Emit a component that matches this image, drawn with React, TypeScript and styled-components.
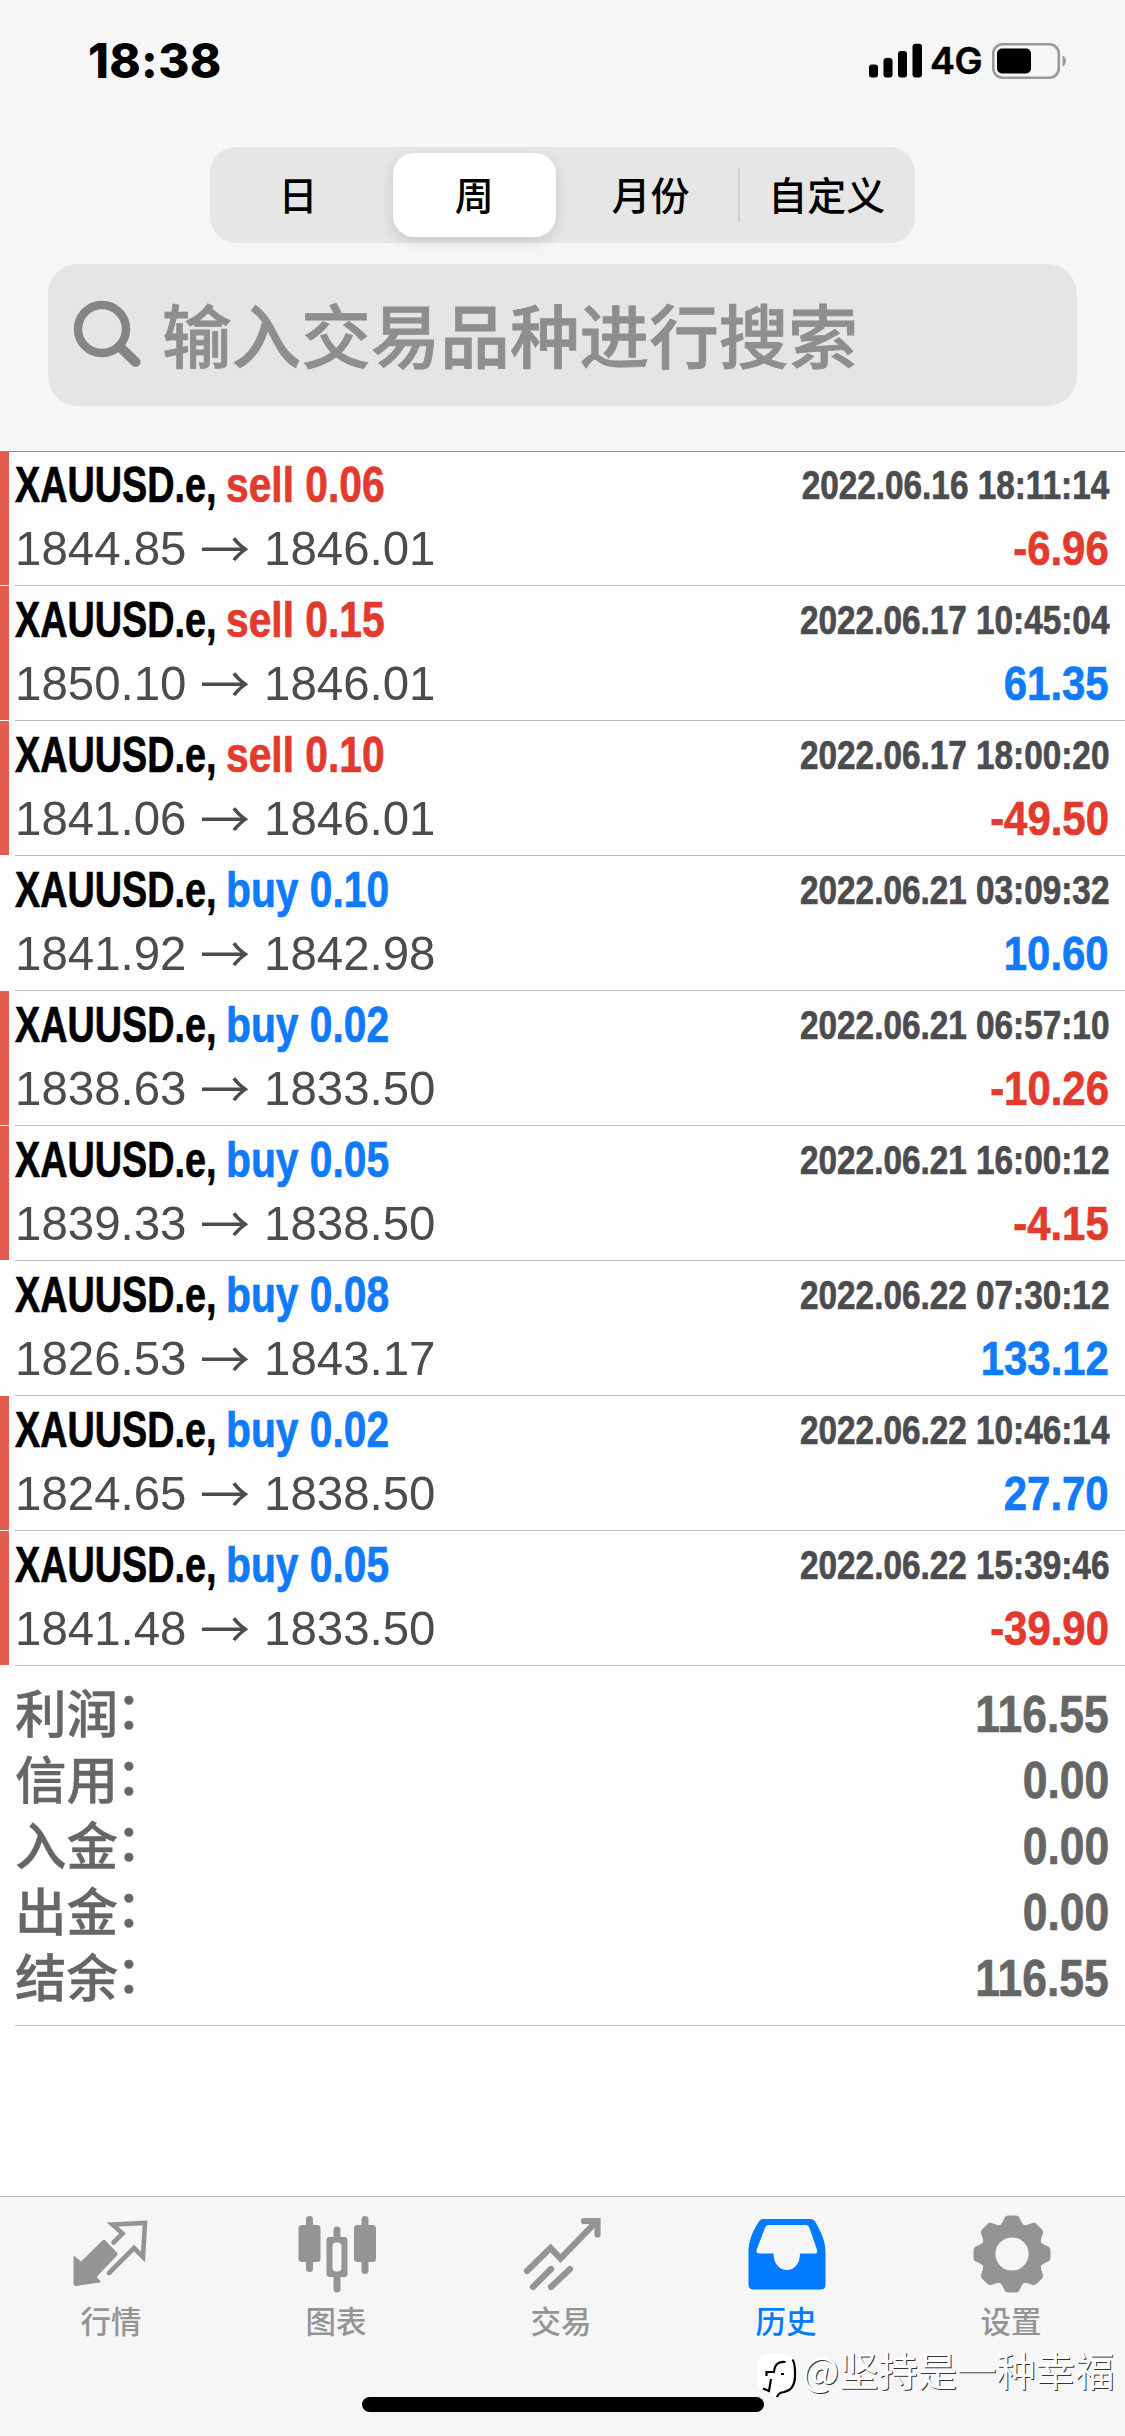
import React from 'react';
import styled, { createGlobalStyle } from 'styled-components';

const RED = '#e23b2e';
const BLUE = '#0f7afa';

const GlobalStyle = createGlobalStyle`
  * { box-sizing: border-box; }
  body { margin: 0; background: #fff; }
`;

const Screen = styled.div`
  position: relative;
  display: flex;
  flex-direction: column;
  width: 1125px;
  height: 2436px;
  overflow: hidden;
  background: #fefefe;
  font-family: 'Liberation Sans', 'Noto Sans CJK SC', sans-serif;
`;

const Header = styled.header`
  display: flex;
  flex-direction: column;
  align-items: center;
  height: 451px;
  background: #f6f6f6;
`;

const StatusBar = styled.div`
  display: flex;
  justify-content: space-between;
  width: 100%;
  height: 147px;
  padding: 32px 58px 0 88px;
  color: #000;
  font-family: Inter, sans-serif;
`;

const Clock = styled.span`
  font-size: 47.5px;
  line-height: 58px;
  font-weight: 800;
  letter-spacing: 0.3px;
`;

const StatusRight = styled.div`
  display: flex;
  height: 58px;
  align-items: center;
`;

const Network = styled.span`
  width: 62px;
  margin-left: 7px;
  font-size: 37.5px;
  font-weight: 600;
  line-height: 58px;
  letter-spacing: -0.5px;
  -webkit-text-stroke: 0.5px #000;
`;

const Segmented = styled.div`
  display: flex;
  width: 705px;
  height: 96px;
  padding: 6px 0;
  border-radius: 26px;
  background: #e6e6e6;
`;

const Segment = styled.button<{ $active?: boolean }>`
  display: flex;
  flex: 1;
  align-items: center;
  justify-content: center;
  margin: 0 7px;
  padding: 0 0 4px;
  border: 0;
  border-radius: 21px;
  background: ${p => (p.$active ? '#fff' : 'transparent')};
  box-shadow: ${p => (p.$active ? '0 5px 14px rgba(0,0,0,.12)' : 'none')};
  color: #000;
  font-family: 'Noto Sans CJK SC', sans-serif;
  font-size: 39px;
  font-weight: 500;
  white-space: nowrap;
`;

const SegmentDivider = styled.i`
  width: 2px;
  height: 54px;
  margin: 15px -1px;
  background: #cfcfd1;
`;

const SearchBox = styled.div`
  display: flex;
  align-items: center;
  width: 1029px;
  height: 142px;
  margin-top: 21px;
  padding-left: 24px;
  border-radius: 30px;
  background: #e5e5e7;
`;

const Placeholder = styled.span`
  margin: -5px 0 0 16px;
  color: #8e8e90;
  font-family: 'Noto Sans CJK SC', sans-serif;
  font-size: 69.6px;
  font-weight: 500;
  line-height: 100px;
  -webkit-text-stroke: 0.8px #8e8e90;
`;

const Deals = styled.main`
  display: flex;
  flex-direction: column;
  border-top: 1px solid #8f8f92;
`;

const Deal = styled.section<{ $marked: boolean }>`
  display: flex;
  height: 135px;
  padding-left: 6px;
  background: linear-gradient(${p => (p.$marked ? '#e35d4f, #e35d4f' : 'transparent, transparent')}) 0 0 / 9px calc(100% - 1px) no-repeat;
  &:first-child { height: 134px; }
`;

const DealBody = styled.div`
  display: flex;
  flex: 1;
  flex-direction: column;
  justify-content: flex-end;
  margin-left: 9px;
  padding: 0 16px 6px 0;
  border-bottom: 1px solid #bcbcbf;
`;

const Line = styled.div<{ $h: number }>`
  display: flex;
  align-items: center;
  justify-content: space-between;
  height: ${p => p.$h}px;
`;

const Group = styled.div`
  display: flex;
  align-items: center;
`;

const Condensed = styled.span<{ $size: number; $sx: number; $color: string; $w?: number; $right?: boolean }>`
  display: block;
  width: ${p => (p.$w ? `${p.$w}px` : 'auto')};
  color: ${p => p.$color};
  font-size: ${p => p.$size}px;
  font-weight: 700;
  line-height: 60px;
  white-space: nowrap;
  -webkit-text-stroke: 0.7px ${p => p.$color};
  transform: scaleX(${p => p.$sx});
  transform-origin: ${p => (p.$right ? '100%' : '0')} 50%;
`;

const Price = styled.span<{ $w?: number }>`
  width: ${p => (p.$w ? `${p.$w}px` : 'auto')};
  color: #4c4c4f;
  font-size: 49px;
  line-height: 60px;
  transform: scaleX(0.968);
  transform-origin: 0 50%;
`;

const Arrow = styled.span`
  width: 64px;
  margin: -4px 0 0 1px;
  color: #4c4c4f;
  font-family: 'Noto Sans CJK SC', sans-serif;
  font-size: 50px;
  font-weight: 400;
  line-height: 60px;
`;

const Summary = styled.section`
  display: flex;
  flex-direction: column;
  height: 360px;
  margin-left: 15px;
  padding: 15px 16px 0 0;
  border-bottom: 1px solid #bcbcbf;
`;

const SummaryLabel = styled.span`
  display: flex;
  margin-top: -7px;
  color: #666;
  font-family: 'Noto Sans CJK SC', sans-serif;
  font-size: 51.5px;
  font-weight: 500;
  line-height: 66px;
  -webkit-text-stroke: 0.4px #666;
`;

const Colon = styled.span`
  transform: translate(-2px, -4px);
`;

const TabBar = styled.nav`
  display: flex;
  height: 240px;
  margin-top: auto;
  border-top: 1px solid #b0b0b2;
  background: #f6f6f6;
`;

const Tab = styled.a<{ $active?: boolean }>`
  display: flex;
  flex: 1;
  flex-direction: column;
  align-items: center;
  padding: 18px 1px 0 0;
  color: ${p => (p.$active ? '#007aff' : '#949494')};
`;

const TabLabel = styled.span`
  margin: 5px 2px 0 0;
  font-family: 'Noto Sans CJK SC', sans-serif;
  font-size: 30.5px;
  font-weight: 500;
  line-height: 44px;
`;

const HomeIndicator = styled.div`
  position: absolute;
  left: 362px;
  top: 2397px;
  width: 402px;
  height: 15px;
  border-radius: 8px;
  background: #000;
`;

const Watermark = styled.div`
  position: absolute;
  left: 756px;
  top: 2340px;
  display: flex;
  align-items: center;
  color: #fff;
  font-family: 'Noto Sans CJK SC', sans-serif;
  font-size: 39.3px;
  font-weight: 400;
  line-height: 60px;
  white-space: nowrap;
  text-shadow: 1px 1px 0 #333;
`;

const WatermarkText = styled.span`
  margin-top: -2px;
`;

type DealData = { side: 'sell' | 'buy'; lot: string; from: string; to: string; time: string; profit: string; marked: boolean };

const deals: DealData[] = [
  { side: 'sell', lot: '0.06', from: '1844.85', to: '1846.01', time: '2022.06.16 18:11:14', profit: '-6.96', marked: true },
  { side: 'sell', lot: '0.15', from: '1850.10', to: '1846.01', time: '2022.06.17 10:45:04', profit: '61.35', marked: true },
  { side: 'sell', lot: '0.10', from: '1841.06', to: '1846.01', time: '2022.06.17 18:00:20', profit: '-49.50', marked: true },
  { side: 'buy', lot: '0.10', from: '1841.92', to: '1842.98', time: '2022.06.21 03:09:32', profit: '10.60', marked: false },
  { side: 'buy', lot: '0.02', from: '1838.63', to: '1833.50', time: '2022.06.21 06:57:10', profit: '-10.26', marked: true },
  { side: 'buy', lot: '0.05', from: '1839.33', to: '1838.50', time: '2022.06.21 16:00:12', profit: '-4.15', marked: true },
  { side: 'buy', lot: '0.08', from: '1826.53', to: '1843.17', time: '2022.06.22 07:30:12', profit: '133.12', marked: false },
  { side: 'buy', lot: '0.02', from: '1824.65', to: '1838.50', time: '2022.06.22 10:46:14', profit: '27.70', marked: true },
  { side: 'buy', lot: '0.05', from: '1841.48', to: '1833.50', time: '2022.06.22 15:39:46', profit: '-39.90', marked: true },
];

const totals = [
  ['利润', '116.55'],
  ['信用', '0.00'],
  ['入金', '0.00'],
  ['出金', '0.00'],
  ['结余', '116.55'],
];

const SignalIcon = () => (
  <svg width="54" height="36" viewBox="0 0 54 36">
    <rect x="0" y="21.5" width="9" height="13" rx="3" />
    <rect x="14.5" y="15" width="9" height="19.5" rx="3" />
    <rect x="29" y="8" width="9" height="26.5" rx="3" />
    <rect x="43.5" y="0.8" width="9.5" height="33.7" rx="3" />
  </svg>
);

const BatteryIcon = () => (
  <svg width="75" height="36" viewBox="0 0 75 36">
    <rect x="1.2" y="1.2" width="65.6" height="33.6" rx="9.5" fill="none" stroke="#9a9a9a" strokeWidth="2.6" />
    <rect x="5" y="5.5" width="34" height="25" rx="5" />
    <path d="M70.5 12.5q3.5 1.8 3.5 5.5t-3.5 5.5z" fill="#9a9a9a" />
  </svg>
);

const SearchIcon = () => (
  <svg width="74" height="72" viewBox="0 0 74 72" fill="none" stroke="#858588" strokeLinecap="round">
    <circle cx="30" cy="30" r="24" strokeWidth="8.4" />
    <path d="M48 48L63.500 63" strokeWidth="10" />
  </svg>
);

const QuotesIcon = () => (
  <svg width="78" height="78" viewBox="0 0 78 78">
    <path d="M32.5 25.500Q31 24 29.500 25.500L8 46.500L1.500 41Q0.500 40.500 0.500 42V68.500Q0.500 71 3 71L26.500 67.500Q28.500 67 27 65.500L23.500 62L44 40.500Q45.500 39 44 37.500Z" fill="currentColor" />
    <path d="M40.500 27.500L49.500 18.500L39.500 9.500L72 8L70 42L61 33L36 58" fill="none" stroke="currentColor" strokeWidth="4.600" strokeLinecap="round" />
  </svg>
);

const ChartIcon = () => (
  <svg width="78" height="78" viewBox="0 0 78 78" fill="currentColor">
    <rect x="0.500" y="10" width="22" height="37" rx="3.500" />
    <rect x="8" y="1" width="7" height="56" rx="3.500" />
    <rect x="56" y="10" width="22" height="37" rx="3.500" />
    <rect x="63.500" y="1" width="7" height="58" rx="3.500" />
    <path fillRule="evenodd" d="M31.500 22H35.500V15a3.500 3.500 0 0 1 7 0v7H46.500a3 3 0 0 1 3 3V59a3 3 0 0 1-3 3H42.500V74a3.500 3.500 0 0 1-7 0V62H31.500a3 3 0 0 1-3-3V25a3 3 0 0 1 3-3zM38 27.500q-3.500 0-3.500 4V52.500q0 4 3.500 4h2q3.500 0 3.500-4V31.500q0-4-3.500-4z" />
  </svg>
);

const TradeIcon = () => (
  <svg width="78" height="78" viewBox="0 0 78 78" fill="none" stroke="currentColor" strokeWidth="6.200" strokeLinecap="round">
    <path d="M4 56L27.500 33L37.500 43.500L73 7" />
    <path d="M61 6H74.500V19.500" />
    <path d="M10 72L28 54M28 72L47 54" />
  </svg>
);

const HistoryIcon = () => (
  <svg width="78" height="78" viewBox="0 0 78 78" fill="currentColor">
    <path fillRule="evenodd" d="M15 4H62.500Q66 4 68 8C74 19 77.500 27 77.500 37V69.500Q77.500 74.500 72.500 74.500H5.500Q0.500 74.500 0.500 69.500V37C0.500 27 4 17 10 8Q12 4 15 4ZM21 10Q18 10 17 13L8.500 35Q8 38.500 11.500 38.500H25.500C25.500 48 31 55 39 55S52 48 52 38.500H66.500Q70 38.500 69 35L61.500 13Q60.500 10 57.500 10Z" />
  </svg>
);

const toothRing = Array.from({ length: 8 }, (_, i) => i * 45);

const SettingsIcon = () => (
  <svg width="78" height="78" viewBox="0 0 78 78">
    <circle cx="39" cy="39" r="23.800" fill="none" stroke="currentColor" strokeWidth="14.400" />
    {toothRing.map(a => (
      <path key={a} transform={`rotate(${a} 39 39)`} fill="currentColor" d="M26 11C28.500 9.500 29.500 7 31 4Q32 0.500 35.500 0.500H42.500Q46 0.500 47 4C48.500 7 49.500 9.500 52 11L46 20H32Z" />
    ))}
  </svg>
);

const WatermarkLogo = () => (
  <svg width="46" height="60" viewBox="0 0 46 60">
    <path d="M13 14H27Q38 14 38 26V40Q38 51 27 52Q22 53 20 58L14 52Q1 52 1 40V26Q1 14 13 14Z" fill="#fff" />
    <path d="M36.500 19.500Q39.500 24 39 37Q38.500 50 28 52Q22.500 52.500 21 57" fill="none" stroke="#000" strokeWidth="2.200" />
    <path d="M29.500 22Q19 20.500 18 32H10.500V36M15 39L13 51L7 48.500M25 34H28" fill="none" stroke="#000" strokeWidth="2.200" />
  </svg>
);

const tabs = [
  { label: '行情', Icon: QuotesIcon },
  { label: '图表', Icon: ChartIcon },
  { label: '交易', Icon: TradeIcon },
  { label: '历史', Icon: HistoryIcon, active: true },
  { label: '设置', Icon: SettingsIcon },
];

export default function App() {
  return (
    <Screen>
      <GlobalStyle />
      <Header>
        <StatusBar>
          <Clock>18:38</Clock>
          <StatusRight>
            <SignalIcon />
            <Network>4G</Network>
            <BatteryIcon />
          </StatusRight>
        </StatusBar>
        <Segmented>
          <Segment>日</Segment>
          <Segment $active>周</Segment>
          <Segment>月份</Segment>
          <SegmentDivider />
          <Segment>自定义</Segment>
        </Segmented>
        <SearchBox>
          <SearchIcon />
          <Placeholder>输入交易品种进行搜索</Placeholder>
        </SearchBox>
      </Header>
      <Deals>
        {deals.map(d => (
          <Deal key={d.time} $marked={d.marked}>
            <DealBody>
              <Line $h={63}>
                <Group>
                  <Condensed $size={50} $sx={0.755} $color="#000" $w={211}>XAUUSD.e,</Condensed>
                  <Condensed $size={50} $sx={0.815} $color={d.side === 'sell' ? RED : BLUE}>{d.side} {d.lot}</Condensed>
                </Group>
                <Condensed $size={40} $sx={0.833} $color="#4c4c4f" $right>{d.time}</Condensed>
              </Line>
              <Line $h={63}>
                <Group>
                  <Price $w={184}>{d.from}</Price>
                  <Arrow>→</Arrow>
                  <Price>{d.to}</Price>
                </Group>
                <Condensed $size={49} $sx={0.855} $color={d.profit[0] === '-' ? RED : BLUE} $right>{d.profit}</Condensed>
              </Line>
            </DealBody>
          </Deal>
        ))}
      </Deals>
      <Summary>
        {totals.map(([label, value]) => (
          <Line key={label} $h={66}>
            <SummaryLabel>{label}<Colon>：</Colon></SummaryLabel>
            <Condensed $size={51.5} $sx={0.862} $color="#666" $right>{value}</Condensed>
          </Line>
        ))}
      </Summary>
      <TabBar>
        {tabs.map(({ label, Icon, active }) => (
          <Tab key={label} $active={active}>
            <Icon />
            <TabLabel>{label}</TabLabel>
          </Tab>
        ))}
      </TabBar>
      <HomeIndicator />
      <Watermark>
        <WatermarkLogo />
        <WatermarkText>@坚持是一种幸福</WatermarkText>
      </Watermark>
    </Screen>
  );
}
